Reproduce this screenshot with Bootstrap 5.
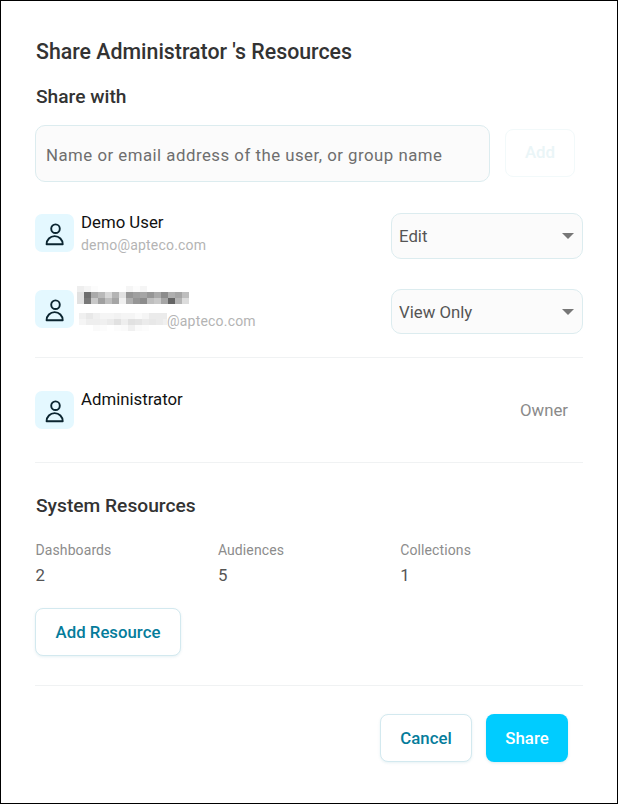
<!DOCTYPE html>
<html lang="en">
  <head>
    <meta charset="UTF-8" />
    <meta name="viewport" content="width=device-width, initial-scale=1.0" />
    <title>Share Resources</title>
    <link href="https://cdn.jsdelivr.net/npm/bootstrap@5.3.0/dist/css/bootstrap.min.css" rel="stylesheet" />
    <style>
      html, body { height: 100%; }
      body { font-family: Roboto, "Liberation Sans", sans-serif; background: #fff; color: #333; }
      .share-frame {
        width: 618px; height: 804px;
        border: 1px solid #000;
        padding: 37px 34px 0 34px;
        overflow: hidden;
      }
      .share-title { font-size: 21.33px; font-weight: 500; line-height: 28px; margin: 0 0 18px 1px; color: #333; }
      .share-sub { font-size: 19.2px; font-weight: 500; line-height: 26px; margin: 0 0 0 1px; color: #333; }
      .search-row { margin-top: 15px; height: 57px; }
      .search-input.form-control {
        width: 455px; height: 57px; padding: 2px 10px 0;
        background: #fbfbfb; border: 1px solid #dcecef; border-radius: 10px;
        font-size: 16.8px; letter-spacing: .5px; color: #666;
      }
      .search-input.form-control::placeholder { color: #6e6e6e; opacity: 1; }
      .add-btn.btn {
        width: 70px; height: 48px; margin: -2px 0 0 15px; padding: 0;
        background: #fff; border: 1px solid #f2f9fa; border-radius: 8px;
        font-size: 16.8px; font-weight: 500; color: #eaf5f7; opacity: 1;
      }
      .person { display: flex; align-items: flex-start; }
      .avatar-box {
        width: 39px; height: 38px; flex: none; border-radius: 7px; background: #e4f8ff;
        display: flex; align-items: center; justify-content: center;
      }
      .avatar-box svg { overflow: visible; }
      .person-info { margin-left: 7px; flex: 1; min-width: 0; }
      .person-name { font-size: 16.8px; line-height: 19px; color: #111; }
      .person-mail { font-size: 14px; line-height: 16px; color: #b4b4b4; margin-top: 5px; letter-spacing: .2px; white-space: nowrap; }
      .role-select.form-select {
        width: 192px; padding: 2px 7px 0; flex: none;
        background-color: #fbfbfb; border: 1px solid #dcecef; border-radius: 10px;
        font-size: 16.8px; color: #555;
        background-image: url("data:image/svg+xml,%3csvg xmlns='http://www.w3.org/2000/svg' width='12' height='6'%3e%3cpath d='M0 0h12L6 6z' fill='%23777'/%3e%3c/svg%3e");
        background-size: 12px 6px; background-position: right 8px center;
      }
      .share-rule { height: 1px; width: 548px; background: #f0f2f3; }
      .owner-tag { font-size: 16.8px; line-height: 24px; color: #8a8a8a; margin-right: 15px; margin-top: 7px; }
      .res-label { font-size: 14px; line-height: 18px; color: #8c8c8c; letter-spacing: .1px; margin-left: 1px; }
      .res-value { font-size: 16.8px; line-height: 20px; color: #555; margin: 6px 0 0 1px; }
      .res-col { width: 182.4px; }
      .ghost-btn.btn {
        height: 48px; padding: 2px 0 0; background: #fff;
        border: 1px solid #d3e9ef; border-radius: 8px;
        box-shadow: 0 1px 3px rgba(0, 120, 150, .1);
        font-size: 16.8px; font-weight: 500; color: #057c9b;
      }
      .solid-btn.btn {
        width: 82px; height: 48px; padding: 2px 0 0; border: 0; border-radius: 8px;
        background: #00ccff; color: #fff; font-size: 16.8px; font-weight: 500;
        box-shadow: 0 1px 3px rgba(0, 120, 150, .15);
      }
      .blur-name { display: block; margin-left: -4px; }
      .blur-mail { flex: none; margin-left: -2px; }
      .person-first { margin-top: 31px; height: 46px; }
      .person-second { margin-top: 30px; height: 45px; }
      .person-first .avatar-box, .person-second .avatar-box { margin-top: 1px; }
      .person-second .person-info { margin-top: -3px; }
      .mail-blur { margin-top: 7px; }
      .role-one { height: 46px; }
      .role-two { height: 45px; }
      .rule-a { margin-top: 23px; }
      .person-owner { margin-top: 33px; height: 71px; }
      .person-owner .person-name { margin-top: -1px; }
      .sys-head { margin-top: 30px; }
      .res-row { margin-top: 22px; margin-left: -.5px; }
      .res-add { width: 146px; margin-top: 23px; }
      .rule-c { margin-top: 29px; }
      .foot-row { margin-top: 28px; width: 533px; gap: 14px; }
      .foot-cancel { width: 92px; }
    </style>
  </head>
  <body>
    <div class="share-frame">
      <h1 class="share-title">Share Administrator 's Resources</h1>
      <h2 class="share-sub">Share with</h2>

      <div class="d-flex align-items-center search-row">
        <input type="text" class="form-control search-input" placeholder="Name or email address of the user, or group name" />
        <button type="button" class="btn add-btn" disabled>Add</button>
      </div>

      <!-- Demo user -->
      <div class="person person-first">
        <div class="avatar-box">
          <svg width="24" height="24" viewBox="0 0 24 24" fill="none" stroke="#0b2530" stroke-width="1.9"><circle cx="12.500" cy="7.700" r="4.300"/><path d="M3.600 23.200c0-4.500 3.500-8.100 8.050-8.100s8.050 3.600 8.050 8.100z" stroke-linejoin="round"/></svg>
        </div>
        <div class="person-info">
          <div class="person-name">Demo User</div>
          <div class="person-mail">demo@apteco.com</div>
        </div>
        <select class="form-select role-select role-one"><option>Edit</option></select>
      </div>

      <!-- second user, name is pixelated in the source -->
      <div class="person person-second">
        <div class="avatar-box">
          <svg width="24" height="24" viewBox="0 0 24 24" fill="none" stroke="#0b2530" stroke-width="1.9"><circle cx="12.500" cy="7.700" r="4.300"/><path d="M3.600 23.200c0-4.500 3.500-8.100 8.050-8.100s8.050 3.600 8.050 8.100z" stroke-linejoin="round"/></svg>
        </div>
        <div class="person-info">
          <svg class="blur-name" width="112" height="20" viewBox="0 0 112 20" id="blurName"></svg>
          <div class="person-mail d-flex mail-blur"><svg class="blur-mail" width="88" height="18" viewBox="0 0 88 18" id="blurMail"></svg><span>@apteco.com</span></div>
        </div>
        <select class="form-select role-select role-two"><option>View Only</option></select>
      </div>

      <div class="share-rule rule-a"></div>

      <div class="person person-owner">
        <div class="avatar-box">
          <svg width="24" height="24" viewBox="0 0 24 24" fill="none" stroke="#0b2530" stroke-width="1.9"><circle cx="12.500" cy="7.700" r="4.300"/><path d="M3.600 23.200c0-4.500 3.500-8.100 8.050-8.100s8.050 3.600 8.050 8.100z" stroke-linejoin="round"/></svg>
        </div>
        <div class="person-info">
          <div class="person-name">Administrator</div>
        </div>
        <div class="owner-tag">Owner</div>
      </div>

      <div class="share-rule"></div>

      <h2 class="share-sub sys-head">System Resources</h2>
      <div class="d-flex res-row">
        <div class="res-col"><div class="res-label">Dashboards</div><div class="res-value">2</div></div>
        <div class="res-col"><div class="res-label">Audiences</div><div class="res-value">5</div></div>
        <div class="res-col"><div class="res-label">Collections</div><div class="res-value">1</div></div>
      </div>
      <button type="button" class="btn ghost-btn res-add">Add Resource</button>

      <div class="share-rule rule-c"></div>

      <div class="d-flex justify-content-end foot-row">
        <button type="button" class="btn ghost-btn foot-cancel">Cancel</button>
        <button type="button" class="btn solid-btn">Share</button>
      </div>
    </div>

    <script src="https://cdn.jsdelivr.net/npm/bootstrap@5.3.0/dist/js/bootstrap.bundle.min.js"></script>
    <script>
      // mosaic for the pixelated name and mail
      function mosaic(id, rows) {
        const svg = document.getElementById(id);
        rows.forEach((row, y) => {
          row.forEach((g, x) => {
            if (g >= 255) return;
            const r = document.createElementNS("http://www.w3.org/2000/svg", "rect");
            r.setAttribute("x", x * 7);
            r.setAttribute("y", y * 6);
            r.setAttribute("width", 7);
            r.setAttribute("height", 6);
            r.setAttribute("fill", `rgb(${g},${g},${g})`);
            svg.appendChild(r);
          });
        });
      }
      mosaic("blurName", [
        [238,245,252,255,255,255,255,245,252,245,255,255,255,255,255,255],
        [225,110,170,185,215,180,225,150,160,165,150,170,140,175,165,190],
        [225,120,200,160,190,165,240,175,150,140,190,200,165,100,180,220],
      ]);
      mosaic("blurMail", [
        [240,232,240,245,245,242,245,245,250,245,235,235,235],
        [245,238,238,240,235,225,238,225,228,235,232,235,240],
        [255,255,250,252,255,252,250,240,250,252,255,255,255],
      ]);
    </script>
  </body>
</html>
